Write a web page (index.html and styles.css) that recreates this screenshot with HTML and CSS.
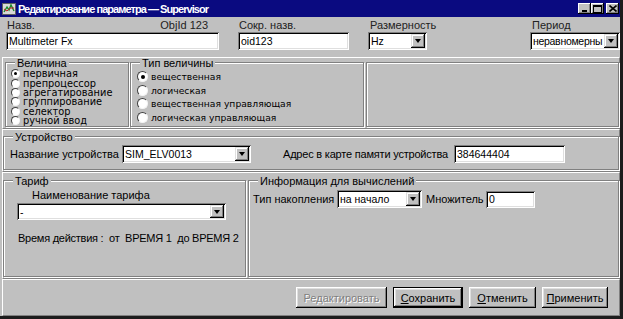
FILE: index.html
```html
<!DOCTYPE html>
<html lang="ru">
<head>
    <meta charset="UTF-8">
    <title>Редактирование параметра — Supervisor</title>
    <link rel="stylesheet" href="styles.css">
</head>
<body>
<div class="window">
    <!-- Заголовок окна -->
    <div class="titlebar">
        <svg class="app-icon" viewBox="0 0 14 14" width="14" height="14">
            <rect x="0.5" y="1.5" width="13" height="11" fill="#d8d8d8" stroke="#606060"/>
            <polyline points="2,10 5,5 7,8 9,3 12,9" fill="none" stroke="#1a8a2a" stroke-width="1.4"/>
            <polyline points="2,7 5,9 8,6 12,6" fill="none" stroke="#c02020" stroke-width="1"/>
        </svg>
        <span class="title">Редактирование параметра — Supervisor</span>
        <div class="controls">
            <span class="ctl">
                <svg viewBox="0 0 8 7" width="8" height="7"><rect x="1" y="5" width="5" height="2" fill="#000"/></svg>
            </span>
            <span class="ctl">
                <svg viewBox="0 0 9 8" width="9" height="8"><rect x="0.5" y="0.5" width="8" height="7" fill="none" stroke="#000"/><rect x="0" y="0" width="9" height="2" fill="#000"/></svg>
            </span>
            <span class="ctl ctl-close">
                <svg viewBox="0 0 8 7" width="8" height="7"><path d="M0.5 0.5 L7.5 6.5 M7.5 0.5 L0.5 6.5" stroke="#000" stroke-width="1.6"/></svg>
            </span>
        </div>
    </div>

    <div class="content">
        <!-- Основные поля -->
        <div class="top-fields">
            <div class="field field-name">
                <div class="field-label"><span>Назв.</span><span>ObjId 123</span></div>
                <div class="edit">Multimeter Fx</div>
            </div>
            <div class="field field-short">
                <div class="field-label"><span>Сокр. назв.</span></div>
                <div class="edit">oid123</div>
            </div>
            <div class="field field-unit">
                <div class="field-label"><span>Размерность</span></div>
                <div class="combo"><span class="combo-text">Hz</span><span class="combo-btn"></span></div>
            </div>
            <div class="field field-period">
                <div class="field-label"><span>Период</span></div>
                <div class="combo"><span class="combo-text">неравномерны</span><span class="combo-btn"></span></div>
            </div>
        </div>

        <!-- Величина / Тип величины -->
        <div class="section section-kind">
            <div class="group group-kind">
                <span class="group-title">Величина</span>
                <ul class="radio-list dense">
                    <li><span class="radio checked"></span>первичная</li>
                    <li><span class="radio"></span>препроцессор</li>
                    <li><span class="radio"></span>агрегатирование</li>
                    <li><span class="radio"></span>группирование</li>
                    <li><span class="radio"></span>селектор</li>
                    <li><span class="radio"></span>ручной ввод</li>
                </ul>
            </div>
            <div class="group group-type">
                <span class="group-title">Тип величины</span>
                <ul class="radio-list">
                    <li><span class="radio checked"></span>вещественная</li>
                    <li><span class="radio"></span>логическая</li>
                    <li><span class="radio"></span>вещественная управляющая</li>
                    <li><span class="radio"></span>логическая управляющая</li>
                </ul>
            </div>
            <div class="group group-blank"></div>
        </div>

        <!-- Устройство -->
        <div class="section section-device">
            <div class="group group-device">
                <span class="group-title">Устройство</span>
                <div class="row">
                    <span class="label label-device">Название устройства</span>
                    <div class="combo combo-device"><span class="combo-text">SIM_ELV0013</span><span class="combo-btn"></span></div>
                    <span class="label label-addr">Адрес в карте памяти устройства</span>
                    <div class="edit edit-addr">384644404</div>
                </div>
            </div>
        </div>

        <!-- Тариф / Информация для вычислений -->
        <div class="section section-tariff">
            <div class="group group-tariff">
                <span class="group-title">Тариф</span>
                <div class="label tariff-name">Наименование тарифа</div>
                <div class="combo combo-tariff"><span class="combo-text">-</span><span class="combo-btn"></span></div>
                <div class="label tariff-time">Время действия :&nbsp; от&nbsp; ВРЕМЯ 1&nbsp; до ВРЕМЯ 2</div>
            </div>
            <div class="group group-calc">
                <span class="group-title">Информация для вычислений</span>
                <div class="row">
                    <span class="label label-acc">Тип накопления</span>
                    <div class="combo combo-acc"><span class="combo-text">на начало</span><span class="combo-btn"></span></div>
                    <span class="label label-mult">Множитель</span>
                    <div class="edit edit-mult">0</div>
                </div>
            </div>
        </div>

        <!-- Кнопки -->
        <div class="section footer">
            <button class="btn btn-edit" disabled>Редактировать</button>
            <button class="btn btn-save"><u>С</u>охранить</button>
            <button class="btn btn-cancel"><u>О</u>тменить</button>
            <button class="btn btn-apply"><u>П</u>рименить</button>
        </div>
    </div>
</div>
</body>
</html>
```

FILE: styles.css
```css
* {
    box-sizing: border-box;
}

body {
    margin: 0;
    background-color: #c0c0c0;
    font-family: "Liberation Sans", Arial, sans-serif;
    font-size: 11px;
    color: #000;
}

.window {
    width: 623px;
    height: 319px;
    display: flex;
    flex-direction: column;
    background-color: #c0c0c0;
    border-right: 3px solid #1c1c1c;
    border-bottom: 3px solid #1c1c1c;
    overflow: hidden;
}

/* заголовок */
.titlebar {
    height: 17px;
    flex-shrink: 0;
    display: flex;
    align-items: center;
    padding-left: 2px;
    background-color: #0a0a80;
    color: #fff;
}

.app-icon {
    margin-right: 2px;
}

.title {
    font-weight: bold;
    font-size: 11px;
    letter-spacing: -0.95px;
}

.controls {
    margin-left: auto;
    display: flex;
    padding-right: 1px;
}

.ctl {
    width: 13px;
    height: 11px;
    display: flex;
    align-items: center;
    justify-content: center;
    background-color: #c0c0c0;
    box-shadow: inset -1px -1px #000, inset 1px 1px #fff, inset -2px -2px #808080;
}

.ctl-close {
    margin-left: 2px;
}

.content {
    flex: 1;
    display: flex;
    flex-direction: column;
    padding-left: 2px;
}

/* верхние поля */
.top-fields {
    height: 40px;
    flex-shrink: 0;
    display: flex;
    gap: 19px;
    padding: 2px 0 0 4px;
}

.field-label {
    height: 13px;
    line-height: 13px;
    display: flex;
    justify-content: space-between;
    padding-left: 1px;
    white-space: nowrap;
    color: #222;
}

.field-name {
    width: 213px;
}

.field-name .field-label {
    padding-right: 11px;
}

.field-short {
    width: 111px;
}

.field-unit {
    width: 59px;
}

.field-unit .field-label {
    padding-left: 2px;
}

.field-period {
    width: 90px;
    margin-left: auto;
}

.field-period .field-label {
    padding-left: 2px;
}

.field-period .combo-text {
    letter-spacing: -0.3px;
}

.edit,
.combo {
    height: 18px;
    background-color: #fff;
    font-size: 10.5px;
    white-space: nowrap;
    overflow: hidden;
    box-shadow: inset 1px 1px #808080, inset -1px -1px #fff, inset 2px 2px #000, inset -2px -2px #dfdfdf;
}

.edit {
    padding: 0 3px;
    line-height: 18px;
}

.combo {
    display: flex;
    padding: 2px;
}

.combo-text {
    flex: 1;
    padding-left: 1px;
    line-height: 14px;
    overflow: hidden;
}

.combo-btn {
    width: 14px;
    flex-shrink: 0;
    display: flex;
    align-items: center;
    justify-content: center;
    background-color: #c0c0c0;
    box-shadow: inset -1px -1px #000, inset 1px 1px #dfdfdf, inset -2px -2px #808080, inset 2px 2px #fff;
}

.combo-btn::after {
    content: "";
    border-left: 3.5px solid transparent;
    border-right: 3.5px solid transparent;
    border-top: 4px solid #000;
}

/* секции и группы */
.section {
    display: flex;
    flex-shrink: 0;
    align-items: flex-start;
    border-top: 1px solid #fff;
    border-left: 1px solid #fff;
    border-bottom: 1px solid #808080;
    border-right: 1px solid #808080;
}

.group {
    position: relative;
    border: 1px solid #808080;
    box-shadow: inset 1px 1px #fff, 1px 1px #fff;
}

.group-title {
    position: absolute;
    top: -5px;
    left: 9px;
    padding: 0 2px;
    line-height: 10px;
    background-color: #c0c0c0;
    white-space: nowrap;
}

.section-kind {
    height: 72px;
    gap: 1px;
    padding: 4px 0 0 2px;
}

.group-kind {
    width: 124px;
    height: 65px;
    padding: 6px 0 0 5px;
}

.group-type {
    width: 234px;
    height: 65px;
    padding: 7px 0 0 6px;
}

.group-blank {
    flex: 1;
    height: 65px;
    margin-left: 1px;
}

.radio-list {
    list-style: none;
    margin: 0;
    padding: 0;
    font-family: "DejaVu Sans", sans-serif;
    font-size: 9.2px;
}

.radio-list li {
    height: 13.6px;
    display: flex;
    align-items: center;
    gap: 3px;
    white-space: nowrap;
}

.radio-list.dense {
    font-size: 9.8px;
}

.radio-list.dense li {
    height: 9.4px;
    line-height: 9px;
    gap: 3px;
}

.radio {
    width: 11px;
    height: 11px;
    flex-shrink: 0;
    position: relative;
    border-radius: 50%;
    background-color: #fff;
    border: 1.5px solid;
    border-color: #404040 #f4f4f4 #f4f4f4 #404040;
}

.dense .radio {
    width: 9px;
    height: 9px;
}

.radio.checked::after {
    content: "";
    position: absolute;
    top: 50%;
    left: 50%;
    width: 4px;
    height: 4px;
    margin: -2px 0 0 -2px;
    border-radius: 50%;
    background-color: #000;
}

.dense .radio.checked::after {
    width: 3px;
    height: 3px;
    margin: -1.5px 0 0 -1.5px;
}

.row {
    display: flex;
    align-items: center;
    white-space: nowrap;
}

.section-device {
    height: 43px;
    padding-top: 6px;
}

.group-device {
    flex: 1;
    height: 34px;
    padding: 8px 0 0 6px;
}

.label-device {
    width: 112px;
}

.combo-device {
    width: 129px;
}

.label-addr {
    width: 171px;
    margin-left: 32px;
    letter-spacing: -0.2px;
}

.edit-addr {
    width: 111px;
}

.section-tariff {
    height: 107px;
    gap: 2px;
    padding-top: 7px;
}

.group-tariff {
    width: 243px;
    height: 97px;
    padding: 8px 0 0 13px;
}

.tariff-name {
    line-height: 13px;
    padding-left: 15px;
}

.combo-tariff {
    width: 209px;
    height: 17px;
    margin-top: 1px;
}

.tariff-time {
    line-height: 13px;
    margin-top: 12px;
    padding-left: 1px;
    white-space: nowrap;
    letter-spacing: -0.25px;
}

.group-calc {
    flex: 1;
    height: 97px;
    padding: 9px 0 0 4px;
}

.label-acc {
    width: 84px;
}

.combo-acc {
    width: 85px;
}

.label-mult {
    width: 60px;
    margin-left: 4px;
}

.edit-mult {
    width: 49px;
    height: 17px;
    line-height: 16px;
}

/* кнопки */
.footer {
    flex: 1;
    justify-content: flex-end;
    gap: 6px;
    padding: 7px 11px 0 0;
}

.btn {
    height: 21px;
    padding: 0;
    border: none;
    font-family: "Liberation Sans", Arial, sans-serif;
    font-size: 11px;
    color: #000;
    background-color: #c0c0c0;
    box-shadow: inset -1px -1px #000, inset 1px 1px #fff, inset -2px -2px #808080, inset 2px 2px #dfdfdf;
}

.btn-edit {
    width: 91px;
    color: #808080;
    text-shadow: 1px 1px #fff;
}

.btn-save {
    width: 70px;
    border: 1px solid #000;
}

.btn-cancel {
    width: 67px;
}

.btn-apply {
    width: 66px;
}
```
